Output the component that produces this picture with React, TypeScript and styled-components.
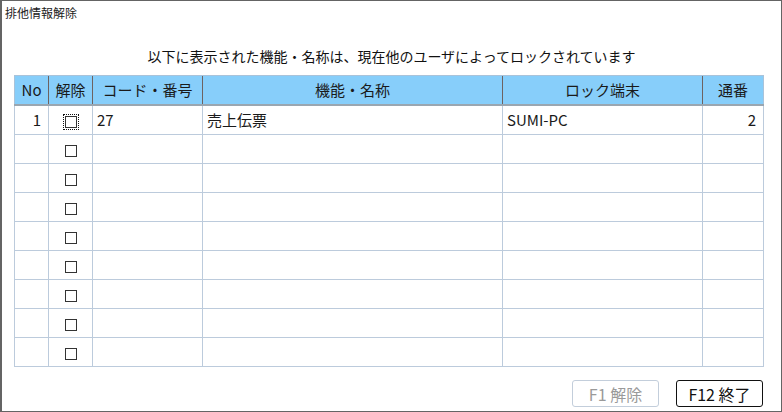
import React, { useState } from "react";
import styled, { createGlobalStyle } from "styled-components";

const GlobalStyle = createGlobalStyle`
  html, body {
    margin: 0;
    padding: 0;
    background: #ffffff;
  }
  body {
    font-family: "Noto Sans CJK JP", "Noto Sans", sans-serif;
    color: #1a1a1a;
  }
`;

const Window = styled.div`
  box-sizing: border-box;
  width: 782px;
  height: 412px;
  border: 1px solid #646464;
  border-left-width: 2px;
  background: #ffffff;
  display: flex;
  flex-direction: column;
`;

const Title = styled.div`
  height: 24px;
  padding-left: 3px;
  font-size: 12px;
  line-height: 24px;
  color: #222;
`;

const Message = styled.p`
  margin: 12px 0 0;
  height: 38px;
  font-size: 14px;
  line-height: 38px;
  text-align: center;
  color: #111;
`;

const TableWrap = styled.div`
  padding-left: 12px;
`;

const Grid = styled.table`
  border-collapse: collapse;
  table-layout: fixed;
  width: 749px;
  font-size: 15px;
`;

const Th = styled.th<{ $w: number }>`
  width: ${(p) => p.$w}px;
  height: 29px;
  padding: 0;
  background: #87cefa;
  font-weight: normal;
  text-align: center;
  color: #1a1a1a;
  border-left: 1px solid #6e6260;
  border-top: 1px solid #a9c3da;
  border-bottom: 2px solid #9aa6b0;
  box-sizing: border-box;
  &:first-child {
    border-left: 1px solid #a9c3da;
  }
  &:last-child {
    border-right: 1px solid #a9c3da;
  }
`;

const Td = styled.td<{ $align?: "left" | "right" | "center" }>`
  height: 28px;
  padding: 0 ${(p) => (p.$align === "right" ? "7px" : "4px")};
  border: 1px solid #bccbdc;
  text-align: ${(p) => p.$align || "left"};
  white-space: nowrap;
  overflow: hidden;
`;

const Check = styled.span<{ $focus?: boolean }>`
  display: inline-block;
  vertical-align: middle;
  width: 10px;
  height: 10px;
  border: 1px solid #333;
  background: #fff;
  outline: ${(p) => (p.$focus ? "1px dotted #111" : "none")};
  outline-offset: 1px;
  cursor: pointer;
`;

const Footer = styled.div`
  margin-top: auto;
  padding: 0 18px 4px 0;
  display: flex;
  justify-content: flex-end;
  gap: 17px;
`;

const Button = styled.button`
  width: 87px;
  height: 27px;
  box-sizing: border-box;
  border: 1px solid #111;
  border-radius: 3px;
  background: #fff;
  font-family: "Noto Sans CJK JP", "Noto Sans", sans-serif;
  font-size: 16px;
  color: #111;
  padding: 0;
  &:disabled {
    border-color: #c3cedb;
    color: #9a9a9a;
  }
`;

const columns = [
  { label: "No", w: 34 },
  { label: "解除", w: 44 },
  { label: "コード・番号", w: 110 },
  { label: "機能・名称", w: 300 },
  { label: "ロック端末", w: 200 },
  { label: "通番", w: 61 },
];

const rows = [
  { no: "1", code: "27", name: "売上伝票", pc: "SUMI-PC", seq: "2" },
  ...Array.from({ length: 8 }, () => ({ no: "", code: "", name: "", pc: "", seq: "" })),
];

const App = () => {
  const [checked, setChecked] = useState<boolean[]>(rows.map(() => false));

  return (
    <>
      <GlobalStyle />
      <Window>
        <Title>排他情報解除</Title>
        <Message>以下に表示された機能・名称は、現在他のユーザによってロックされています</Message>
        <TableWrap>
          <Grid>
            <thead>
              <tr>
                {columns.map((c) => (
                  <Th key={c.label} $w={c.w}>
                    {c.label}
                  </Th>
                ))}
              </tr>
            </thead>
            <tbody>
              {rows.map((r, i) => (
                <tr key={i}>
                  <Td $align="right">{r.no}</Td>
                  <Td $align="center">
                    <Check
                      $focus={i === 0}
                      style={{ background: checked[i] ? "#333" : undefined }}
                      onClick={() =>
                        setChecked(checked.map((v, j) => (j === i ? !v : v)))
                      }
                    />
                  </Td>
                  <Td>{r.code}</Td>
                  <Td>{r.name}</Td>
                  <Td>{r.pc}</Td>
                  <Td $align="right">{r.seq}</Td>
                </tr>
              ))}
            </tbody>
          </Grid>
        </TableWrap>
        <Footer>
          <Button disabled>F1 解除</Button>
          <Button>F12 終了</Button>
        </Footer>
      </Window>
    </>
  );
};

export default App;
